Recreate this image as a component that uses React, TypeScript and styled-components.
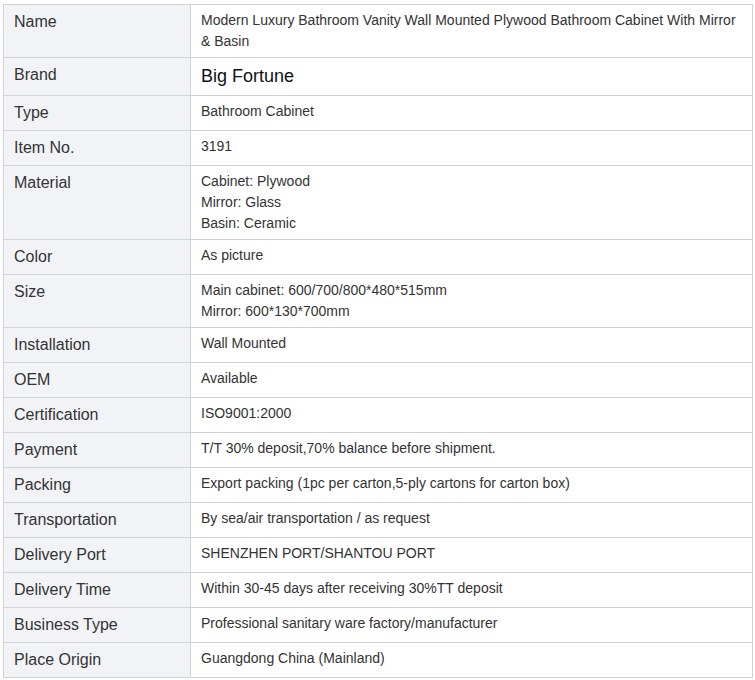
import React from "react";
import styled, { createGlobalStyle } from "styled-components";

const Global = createGlobalStyle`
  html, body { margin: 0; padding: 0; background: #ffffff; }
  body { font-family: "Liberation Sans", Arial, sans-serif; color: #333333; }
`;

const Wrap = styled.div`
  padding: 4px 2px 0 3px;
`;

const Table = styled.table`
  width: 750px;
  border-collapse: collapse;
  table-layout: fixed;
  border: 1px solid #d2d2d2;
`;

const Label = styled.td`
  width: 166px;
  background: #f2f3f7;
  border: 1px solid #d2d2d2;
  padding: 5px 10px;
  font-size: 16px;
  line-height: 24px;
  color: #333333;
  vertical-align: top;
`;

const Value = styled.td<{ $big?: boolean }>`
  border: 1px solid #d2d2d2;
  padding: 5px 10px;
  font-size: ${(p) => (p.$big ? "18px" : "14px")};
  line-height: ${(p) => (p.$big ? "27px" : "21px")};
  color: ${(p) => (p.$big ? "#111111" : "#333333")};
  vertical-align: top;
`;

const Line = styled.div``;

const rows: { label: string; value: string[]; big?: boolean }[] = [
  {
    label: "Name",
    value: [
      "Modern Luxury Bathroom Vanity Wall Mounted Plywood Bathroom Cabinet With Mirror & Basin",
    ],
  },
  { label: "Brand", value: ["Big Fortune"], big: true },
  { label: "Type", value: ["Bathroom Cabinet"] },
  { label: "Item No.", value: ["3191"] },
  {
    label: "Material",
    value: ["Cabinet: Plywood", "Mirror: Glass", "Basin: Ceramic"],
  },
  { label: "Color", value: ["As picture"] },
  {
    label: "Size",
    value: ["Main cabinet: 600/700/800*480*515mm", "Mirror: 600*130*700mm"],
  },
  { label: "Installation", value: ["Wall Mounted"] },
  { label: "OEM", value: ["Available"] },
  { label: "Certification", value: ["ISO9001:2000"] },
  { label: "Payment", value: ["T/T 30% deposit,70% balance before shipment."] },
  {
    label: "Packing",
    value: ["Export packing (1pc per carton,5-ply cartons for carton box)"],
  },
  { label: "Transportation", value: ["By sea/air transportation / as request"] },
  { label: "Delivery Port", value: ["SHENZHEN PORT/SHANTOU PORT"] },
  { label: "Delivery Time", value: ["Within 30-45 days after receiving 30%TT deposit"] },
  { label: "Business Type", value: ["Professional sanitary ware factory/manufacturer"] },
  { label: "Place Origin", value: ["Guangdong China (Mainland)"] },
];

export default function App() {
  return (
    <>
      <Global />
      <Wrap>
        <Table>
          <tbody>
            {rows.map((r) => (
              <tr key={r.label}>
                <Label>{r.label}</Label>
                <Value $big={r.big}>
                  {r.value.map((v) => (
                    <Line key={v}>{v}</Line>
                  ))}
                </Value>
              </tr>
            ))}
          </tbody>
        </Table>
      </Wrap>
    </>
  );
}
